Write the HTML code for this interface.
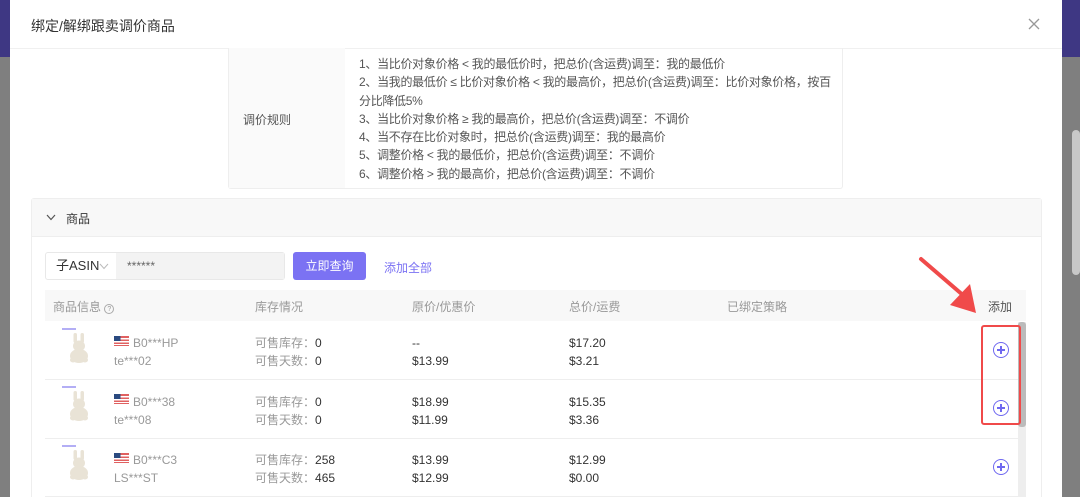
<!DOCTYPE html>
<html><head><meta charset="utf-8"><style>
*{margin:0;padding:0;box-sizing:border-box}
html,body{width:1080px;height:497px;overflow:hidden}
body{position:relative;font-family:"Liberation Sans","Noto Sans CJK SC",sans-serif;font-size:12px;color:#333;background:#fff}
.a{position:absolute}
.g{color:#999}
.rule div{height:18.3px;line-height:18.3px;white-space:nowrap}
.row{position:absolute;left:45px;width:973px;height:59px;border-bottom:1px solid #eee}
.plus{position:absolute;left:993px;width:16px;height:16px;border:1.3px solid #6f68f0;border-radius:50%}
.plus:before{content:"";position:absolute;left:3px;top:6.3px;width:7.5px;height:1.3px;background:#6f68f0}
.plus:after{content:"";position:absolute;left:6.3px;top:3px;width:1.3px;height:7.5px;background:#6f68f0}
</style></head><body>
<div class="a" style="left:0;top:0;width:10px;height:57px;background:#3e3783"></div>
<div class="a" style="left:0;top:57px;width:10px;height:440px;background:#7f7f7f"></div>
<div class="a" style="left:1062px;top:0;width:18px;height:57px;background:#3e3783"></div>
<div class="a" style="left:1062px;top:57px;width:18px;height:440px;background:#7f7f7f"></div>
<div class="a" style="left:1072px;top:130px;width:8px;height:145px;background:#c8c8c8;border-radius:4px"></div>
<div class="a" style="left:31px;top:16px;font-size:14px;color:#333">绑定/解绑跟卖调价商品</div>
<svg class="a" style="left:1028px;top:18px" width="12" height="12"><path d="M1 1L11 11M11 1L1 11" stroke="#999" stroke-width="1.3"/></svg>
<div class="a" style="left:10px;top:48px;width:1052px;height:1px;background:#f0f0f0"></div>
<div class="a" style="left:228px;top:48px;width:615px;height:141px;border:1px solid #eee;border-top:none;border-radius:0 0 3px 3px"></div>
<div class="a" style="left:229px;top:48px;width:116px;height:140px;background:#fafafa"></div>
<div class="a" style="left:243px;top:111px;color:#555">调价规则</div>
<div class="a rule" style="left:359px;top:55px;color:#555;letter-spacing:-0.3px">
<div>1、当比价对象价格 &lt; 我的最低价时，把总价(含运费)调至：我的最低价</div>
<div>2、当我的最低价 ≤ 比价对象价格 &lt; 我的最高价，把总价(含运费)调至：比价对象价格，按百</div>
<div>分比降低5%</div>
<div>3、当比价对象价格 ≥ 我的最高价，把总价(含运费)调至：不调价</div>
<div>4、当不存在比价对象时，把总价(含运费)调至：我的最高价</div>
<div>5、调整价格 &lt; 我的最低价，把总价(含运费)调至：不调价</div>
<div>6、调整价格 &gt; 我的最高价，把总价(含运费)调至：不调价</div>
</div>
<div class="a" style="left:31px;top:198px;width:1011px;height:310px;border:1px solid #eee;border-radius:3px"></div>
<div class="a" style="left:32px;top:199px;width:1009px;height:38px;background:#f8f8f8;border-bottom:1px solid #eee"></div>
<svg class="a" style="left:46px;top:214px" width="10" height="7"><path d="M1 1L5 5.5L9 1" stroke="#555" stroke-width="1.2" fill="none"/></svg>
<div class="a" style="left:66px;top:210px">商品</div>
<div class="a" style="left:45px;top:252px;width:240px;height:28px;border:1px solid #e8e8e8;border-radius:3px;background:#fff"></div>
<div class="a" style="left:116px;top:253px;width:168px;height:26px;background:#f3f3f3"></div>
<div class="a" style="left:56px;top:258px;font-size:13px;line-height:16px">子ASIN</div>
<svg class="a" style="left:99px;top:263px" width="10" height="7"><path d="M1 1L5 5.5L9 1" stroke="#bbb" stroke-width="1" fill="none"/></svg>
<div class="a" style="left:127px;top:259px;color:#666">******</div>
<div class="a" style="left:293px;top:252px;width:73px;height:28px;background:#7b72f3;border-radius:3px;color:#fff;text-align:center;line-height:28px">立即查询</div>
<div class="a" style="left:384px;top:259px;color:#7b72f3">添加全部</div>
<div class="a" style="left:45px;top:290px;width:981px;height:31px;background:#f8f8f8"></div>
<div class="a g" style="left:53px;top:298px">商品信息 <span style="display:inline-block;width:10px;height:10px;border:1px solid #aaa;border-radius:50%;font-size:7px;text-align:center;line-height:9px">?</span></div>
<div class="a g" style="left:255px;top:298px">库存情况</div>
<div class="a g" style="left:412px;top:298px">原价/优惠价</div>
<div class="a g" style="left:569px;top:298px">总价/运费</div>
<div class="a g" style="left:727px;top:298px">已绑定策略</div>
<div class="a" style="left:988px;top:298px;color:#555">添加</div>
<div class="row" style="top:321px"></div><div class="row" style="top:380px"></div><div class="row" style="top:438px"></div>
<div class="a" style="left:1018px;top:322px;width:8px;height:175px;background:#eee"></div>
<div class="a" style="left:1018px;top:322px;width:8px;height:105px;background:#bbb;border-radius:3px"></div>
<svg class="a" style="left:60px;top:327px" width="40" height="170">
<defs><g id="b" fill="#e9e3d6"><ellipse cx="19" cy="29" rx="9" ry="7"/><ellipse cx="19" cy="19" rx="6" ry="5.5"/><rect x="13.5" y="6" width="3.5" height="10" rx="1.7"/><rect x="20.5" y="6" width="3.5" height="10" rx="1.7"/><ellipse cx="13" cy="33" rx="3" ry="2.5"/><ellipse cx="25" cy="33" rx="3" ry="2.5"/></g></defs>
<use href="#b"/><use href="#b" y="58"/><use href="#b" y="117"/>
<rect x="2" y="1" width="14" height="2" fill="#b3aef5"/><rect x="2" y="59" width="14" height="2" fill="#b3aef5"/><rect x="2" y="118" width="14" height="2" fill="#b3aef5"/></svg>
<svg class="a" style="left:114px;top:336px" width="16" height="128">
<defs><g id="f"><rect width="15" height="10" fill="#e06060"/><rect y="2" width="15" height="1.5" fill="#fff"/><rect y="5" width="15" height="1.5" fill="#fff"/><rect y="8" width="15" height="1" fill="#fff"/><rect width="6.5" height="5" fill="#2a4a80"/></g></defs>
<use href="#f"/><use href="#f" y="58"/><use href="#f" y="117"/></svg>
<div class="a g" style="left:133px;top:334px;line-height:18px">B0***HP</div>
<div class="a g" style="left:114px;top:352px;line-height:18px">te***02</div>
<div class="a g" style="left:133px;top:393px;line-height:18px">B0***38</div>
<div class="a g" style="left:114px;top:411px;line-height:18px">te***08</div>
<div class="a g" style="left:133px;top:451px;line-height:18px">B0***C3</div>
<div class="a g" style="left:114px;top:469px;line-height:18px">LS***ST</div>
<div class="a" style="left:255px;top:334px;line-height:18px"><span class="g">可售库存：</span>0<br><span class="g">可售天数：</span>0</div>
<div class="a" style="left:255px;top:393px;line-height:18px"><span class="g">可售库存：</span>0<br><span class="g">可售天数：</span>0</div>
<div class="a" style="left:255px;top:451px;line-height:18px"><span class="g">可售库存：</span>258<br><span class="g">可售天数：</span>465</div>
<div class="a" style="left:412px;top:334px;line-height:18px">--<br>$13.99</div>
<div class="a" style="left:412px;top:393px;line-height:18px">$18.99<br>$11.99</div>
<div class="a" style="left:412px;top:451px;line-height:18px">$13.99<br>$12.99</div>
<div class="a" style="left:569px;top:334px;line-height:18px">$17.20<br>$3.21</div>
<div class="a" style="left:569px;top:393px;line-height:18px">$15.35<br>$3.36</div>
<div class="a" style="left:569px;top:451px;line-height:18px">$12.99<br>$0.00</div>
<div class="plus" style="top:342px"></div>
<div class="plus" style="top:400px"></div>
<div class="plus" style="top:459px"></div>
<div class="a" style="left:981px;top:325px;width:40px;height:100px;border:2px solid #f04a4a;border-radius:3px"></div>
<svg class="a" style="left:910px;top:250px" width="80" height="70"><line x1="11" y1="9" x2="54" y2="46" stroke="#f04a4a" stroke-width="4" stroke-linecap="round"/><polygon points="66,63 40,55 60,34" fill="#f04a4a"/></svg>
</body></html>
